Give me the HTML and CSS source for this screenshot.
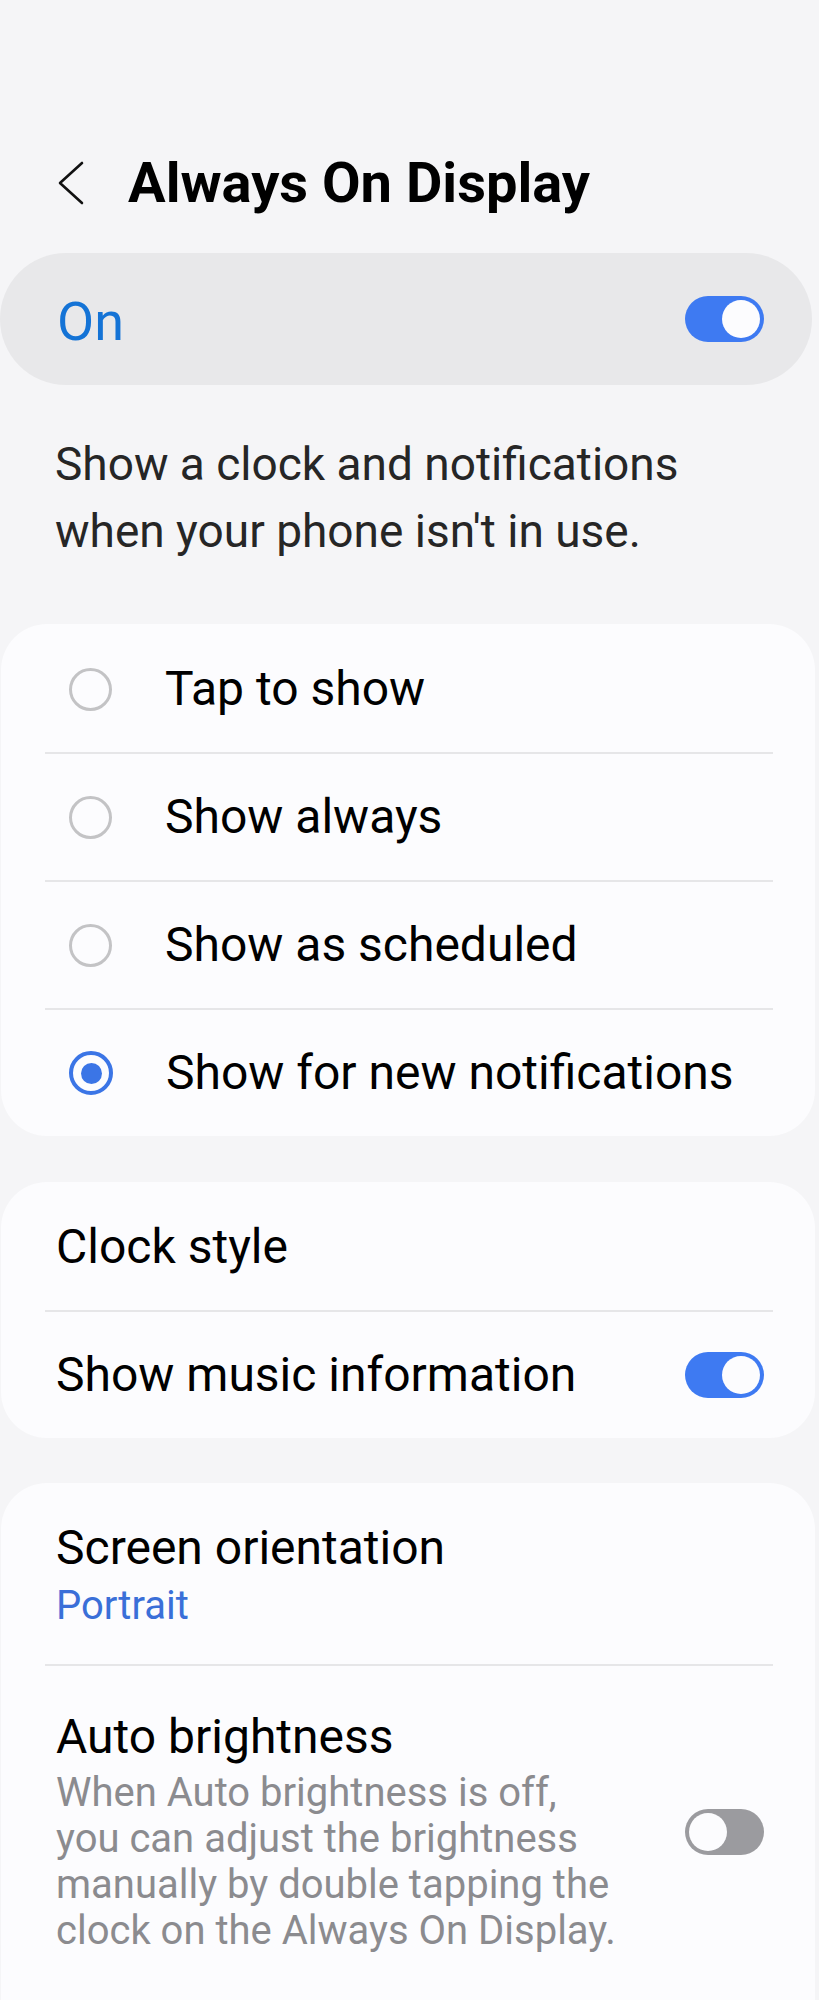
FILE: index.html
```html
<!doctype html>
<html>
<head>
    <meta charset="utf-8">
    <link rel="stylesheet" href="styles.css">
</head>
<body>
<div id="page">
    <div class="header">
        <svg class="back" width="28" height="44" viewBox="0 0 28 44">
            <path d="M25 2 L3 22 L25 42" fill="none" stroke="#111" stroke-width="2.6" stroke-linecap="round" stroke-linejoin="round" />
        </svg>
        <h1>Always On Display</h1>
    </div>

    <div class="master">
        <span class="masterLabel">On</span>
        <span class="switch"><span class="knob"></span></span>
    </div>

    <p class="intro">Show a clock and notifications<br>when your phone isn't in use.</p>

    <div class="card">
        <div class="row radioRow"><span class="radio"></span><span>Tap to show</span></div>
        <div class="divider"></div>
        <div class="row radioRow"><span class="radio"></span><span>Show always</span></div>
        <div class="divider"></div>
        <div class="row radioRow"><span class="radio"></span><span>Show as scheduled</span></div>
        <div class="divider"></div>
        <div class="row radioRow"><span class="radio checked"></span><span>Show for new notifications</span></div>
    </div>

    <div class="card">
        <div class="row"><span>Clock style</span></div>
        <div class="divider"></div>
        <div class="row">
            <span>Show music information</span>
            <span class="switch"><span class="knob"></span></span>
        </div>
    </div>

    <div class="card last">
        <div class="row tall first">
            <div class="text">
                <div class="title">Screen orientation</div>
                <div class="value">Portrait</div>
            </div>
        </div>
        <div class="divider"></div>
        <div class="row tall">
            <div class="text">
                <div class="title">Auto brightness</div>
                <div class="desc">When Auto brightness is off,<br>you can adjust the brightness<br>manually by double tapping the<br>clock on the Always On Display.</div>
            </div>
            <span class="switch off"><span class="knob"></span></span>
        </div>
    </div>
</div>
</body>
</html>
```

FILE: styles.css
```css
html, body {
    margin: 0;
    background: #f5f5f7;
}
body {
    font-family: Roboto, "Noto Sans", sans-serif;
    color: #000;
}
#page {
    padding-top: 150px;
}
.header {
    display: flex;
    align-items: center;
    height: 66px;
    padding-left: 57px;
}
.header h1 {
    margin: 0 0 0 43px;
    font-size: 56px;
    line-height: 66px;
    font-weight: 700;
}
.master {
    display: flex;
    align-items: center;
    justify-content: space-between;
    height: 132px;
    margin: 37px 7px 0 0;
    padding: 0 48px 0 57px;
    border-radius: 66px;
    background: #e8e8ea;
}
.masterLabel {
    margin-top: 5px;
    font-size: 54px;
    line-height: 64px;
    color: #1473d6;
}
.intro {
    margin: 46px 0 0;
    padding-left: 55px;
    font-size: 46px;
    line-height: 67px;
    color: #262626;
}
.card {
    margin: 59px 4px 0 1px;
    padding-top: 2px;
    border-radius: 46px;
    background: #fcfcfe;
}
.card + .card {
    margin-top: 46px;
}
.card.last {
    margin-top: 45px;
    padding-top: 0;
    border-radius: 46px 46px 0 0;
}
.row {
    display: flex;
    align-items: center;
    justify-content: space-between;
    height: 126px;
    padding: 0 51px 0 55px;
    font-size: 48px;
    line-height: 56px;
}
.radioRow {
    justify-content: flex-start;
    padding-left: 68px;
}
.radio {
    flex: none;
    display: flex;
    align-items: center;
    justify-content: center;
    box-sizing: border-box;
    width: 43px;
    height: 43px;
    margin-right: 53px;
    border: 3px solid #c3c3c5;
    border-radius: 50%;
}
.radio.checked {
    width: 44px;
    height: 44px;
    border: 4px solid #3b75e6;
}
.radio.checked:after {
    content: '';
    width: 21px;
    height: 21px;
    border-radius: 50%;
    background: #3b75e6;
}
.divider {
    height: 2px;
    margin: 0 42px 0 44px;
    background: #e6e6e8;
}
.row.tall {
    height: auto;
    padding-top: 43px;
    padding-bottom: 46px;
}
.row.tall.first {
    padding-top: 37px;
    padding-bottom: 35px;
}
.text {
    flex: 1;
}
.title {
    font-size: 48px;
    line-height: 56px;
}
.value {
    margin-top: 7px;
    font-size: 40px;
    line-height: 46px;
    color: #3a6fd8;
}
.desc {
    margin-top: 5px;
    font-size: 40px;
    line-height: 46px;
    color: #8b8b8f;
}
.switch {
    flex: none;
    display: flex;
    align-items: center;
    justify-content: flex-end;
    box-sizing: border-box;
    width: 79px;
    height: 46px;
    padding: 0 4px;
    border-radius: 23px;
    background: #3e7af2;
}
.switch.off {
    justify-content: flex-start;
    background: #9b9b9f;
}
.knob {
    width: 38px;
    height: 38px;
    border-radius: 50%;
    background: #fcfcfe;
}
```
